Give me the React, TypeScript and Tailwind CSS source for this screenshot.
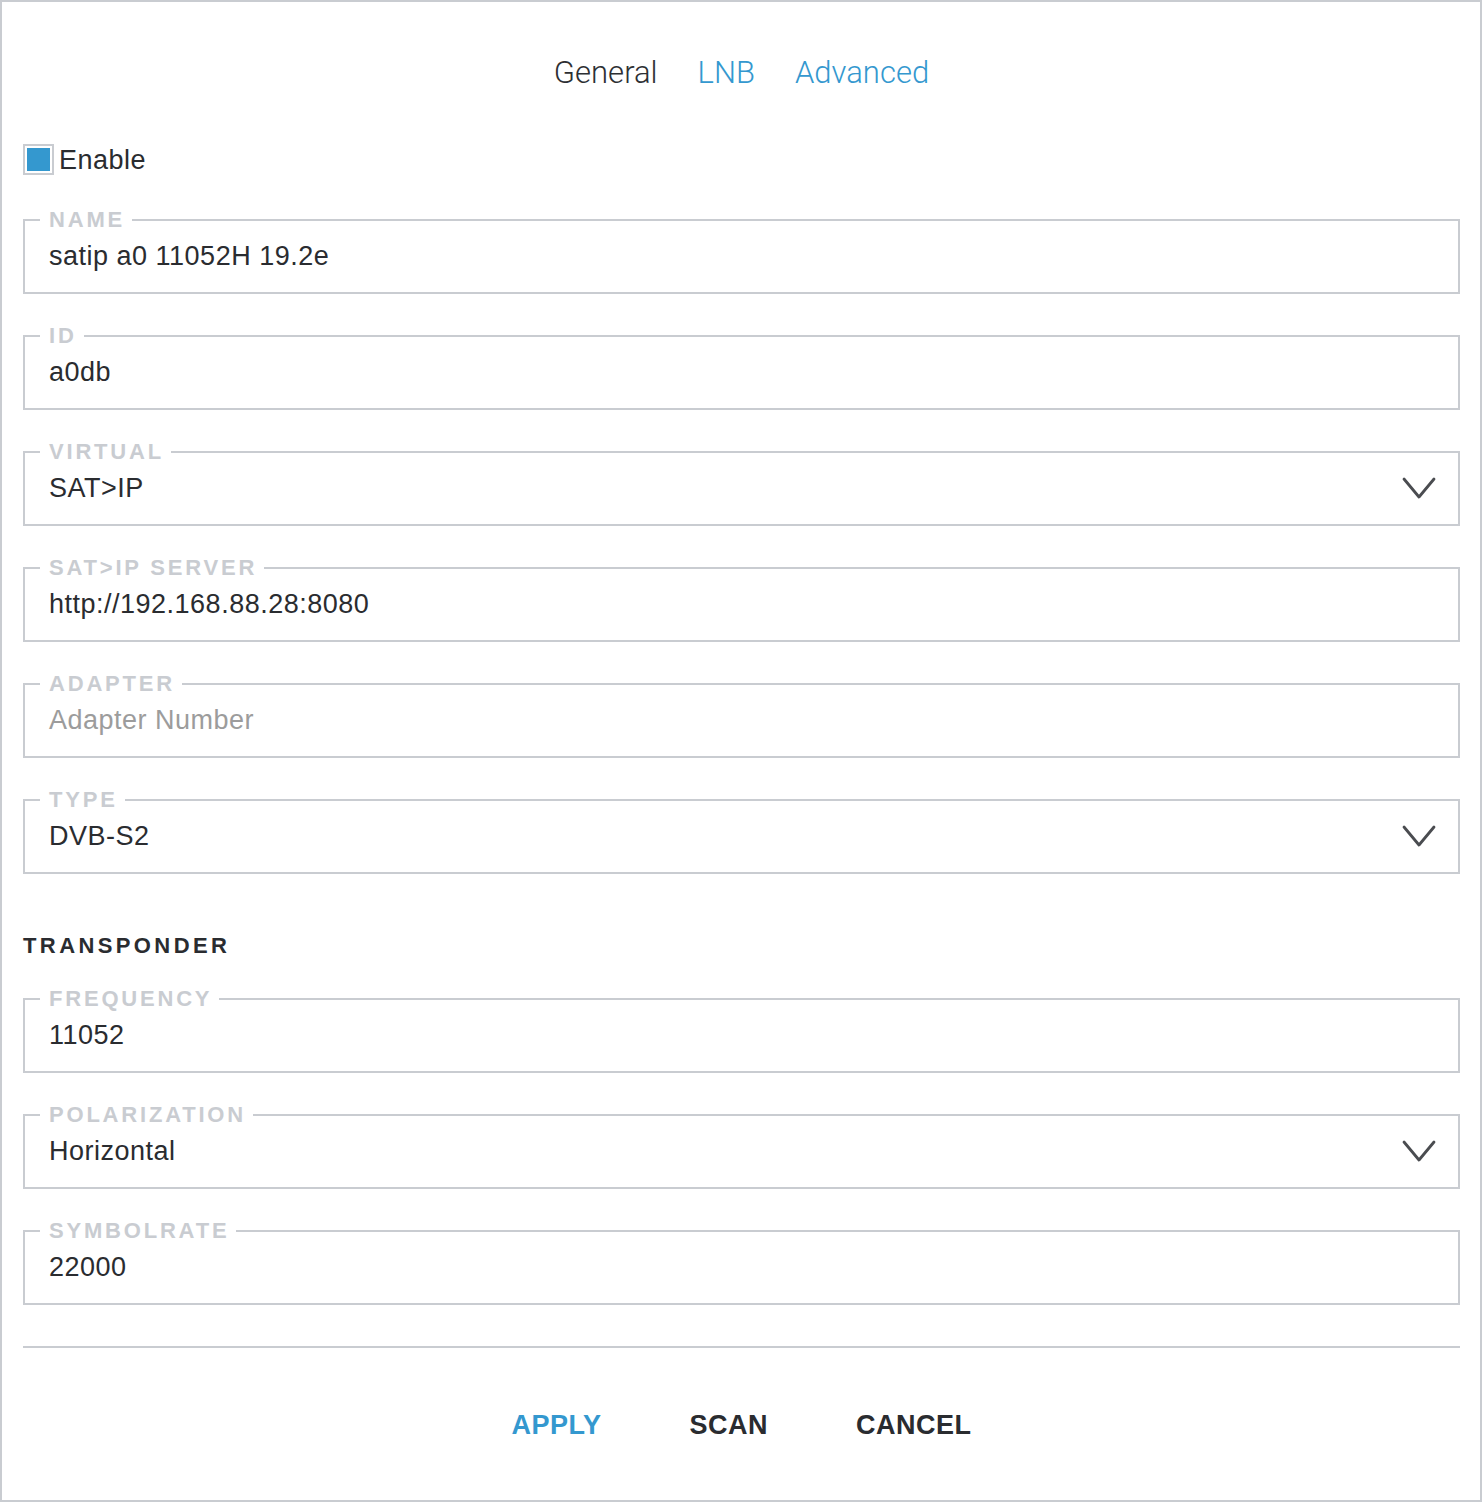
const fields = [
  { label: "NAME", value: "satip a0 11052H 19.2e" },
  { label: "ID", value: "a0db" },
  { label: "VIRTUAL", value: "SAT>IP", select: true },
  { label: "SAT>IP SERVER", value: "http://192.168.88.28:8080" },
  { label: "ADAPTER", placeholder: "Adapter Number" },
  { label: "TYPE", value: "DVB-S2", select: true },
];

const transponder = [
  { label: "FREQUENCY", value: "11052" },
  { label: "POLARIZATION", value: "Horizontal", select: true },
  { label: "SYMBOLRATE", value: "22000" },
];

type FieldProps = {
  label: string;
  value?: string;
  placeholder?: string;
  select?: boolean;
};

const Chevron = () => (
  <svg width="34" height="24" viewBox="0 0 34 24" fill="none" className="shrink-0">
    <path d="M2 3 L17 21 L32 3" stroke="#4a4c50" strokeWidth="2.8" strokeLinecap="round" strokeLinejoin="round" />
  </svg>
);

const Field = ({ label, value, placeholder, select }: FieldProps) => (
  <fieldset className="border-2 border-[#c9ccd1] px-[15px] pb-[21px]">
    <legend className="pl-[9px] pr-[7px] text-[22px] leading-[22px] font-bold tracking-[2.8px] text-[#c9ccd1]">
      {label}
    </legend>
    <div className="flex items-center justify-between pl-[9px] pr-[7px] pt-[10px]">
      <span
        className={`text-[27px] leading-[30px] tracking-[0.5px] ${value ? "text-[#2a2c30]" : "text-[#9c9c9c]"}`}
      >
        {value ?? placeholder}
      </span>
      {select && <Chevron />}
    </div>
  </fieldset>
);

export default function App() {
  return (
    <div
      className="w-[1482px] h-[1502px] border-2 border-[#c9ccd1] bg-white pl-[21px] pr-[20px] pt-[53px] flex flex-col text-[#2a2c30]"
      style={{ fontFamily: '"Liberation Sans", Arial, sans-serif' }}
    >
      <nav
        className="flex justify-center gap-[40px] text-[31px] leading-[36px] font-light"
        style={{ fontFamily: "Roboto, sans-serif" }}
      >
        <span className="text-[#2d2f33]">General</span>
        <span className="text-[#3498cf]">LNB</span>
        <span className="text-[#3498cf]">Advanced</span>
      </nav>

      <label className="mt-[53px] flex items-center gap-[5px]">
        <span className="w-[31px] h-[31px] border-2 border-[#c9ccd1] p-[2px] bg-white">
          <span className="block w-full h-full bg-[#3498cf]" />
        </span>
        <span className="text-[27px] leading-[30px] tracking-[0.5px]">Enable</span>
      </label>

      <div className="mt-[34px] flex flex-col gap-[31px]">
        {fields.map((f) => (
          <Field key={f.label} {...f} />
        ))}
      </div>

      <h2 className="mt-[61px] text-[22px] leading-[22px] font-bold tracking-[3.4px] text-[#2a2c30]">TRANSPONDER</h2>

      <div className="mt-[31px] flex flex-col gap-[31px]">
        {transponder.map((f) => (
          <Field key={f.label} {...f} />
        ))}
      </div>

      <div className="mt-[41px] h-[2px] bg-[#c9ccd1]" />

      <div className="mt-[64px] flex justify-center gap-[88px] text-[27px] leading-[27px] font-bold tracking-[0.5px]">
        <button className="text-[#3498cf]">APPLY</button>
        <button className="text-[#2a2c30]">SCAN</button>
        <button className="text-[#2a2c30]">CANCEL</button>
      </div>
    </div>
  );
}
